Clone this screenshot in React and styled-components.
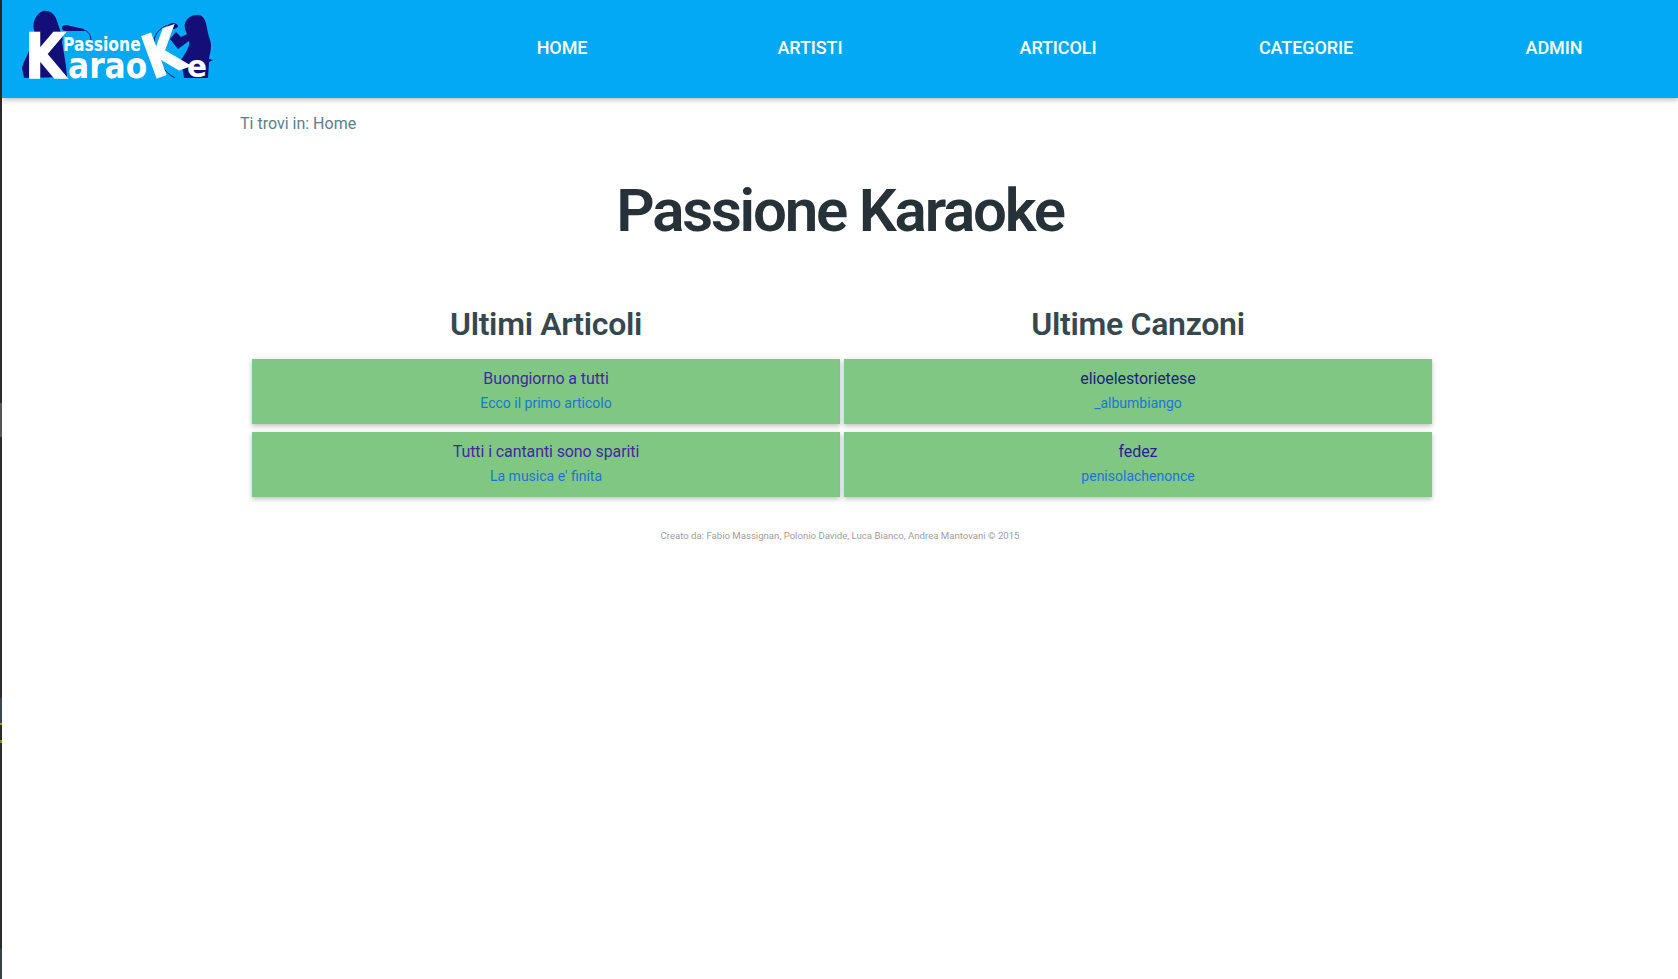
import React from "react";
import styled, { createGlobalStyle } from "styled-components";

const articles = [
  { title: "Buongiorno a tutti", text: "Ecco il primo articolo", tone: "#4527a0" },
  { title: "Tutti i cantanti sono spariti", text: "La musica e' finita", tone: "#4527a0" },
];

const songs = [
  { title: "elioelestorietese", text: "_albumbiango", tone: "#1a237e" },
  { title: "fedez", text: "penisolachenonce", tone: "#311b92" },
];

const navItems = ["HOME", "ARTISTI", "ARTICOLI", "CATEGORIE", "ADMIN"];

// viewBox starts at x=2 so the numbers below read as page coordinates
const Logo = () => (
  <LogoSvg viewBox="2 0 226 90" aria-label="Passione Karaoke">
    <g fill="#140f78">
      <path d="M43 11 C50 10 55 14 57 21 L60 30 C61 34 64 38 62 42 L66 66 L67 77 L24 78 L22 68 C24 60 28 55 30 48 C34 42 36 38 34 30 C32 22 36 14 43 11 Z" />
      <ellipse cx="66" cy="28" rx="4" ry="3" />
      <path d="M66 25 L84 29 L84 31 L66 31 Z" />
      <path d="M197 15 C203 14 206 20 207 28 C208 36 211 40 211 46 C211 52 209 56 209 59 L213 60 L209 62 L208 78 L184 78 L181 60 L186 52 C188 48 190 45 189 41 L178 49 L170 39 L176 32 L181 37 L187 34 C185 30 184 26 185 23 C187 18 191 15 197 15 Z" />
      <ellipse cx="173" cy="26" rx="5" ry="3" />
    </g>
    <g fill="none" stroke="#140f78" strokeWidth="1">
      <path d="M84 30 C88 31 91 35 91 41" />
      <path d="M170 25 C160 26 152 36 154 47 C156 60 164 72 175 78" />
    </g>
    <LogoWord transform="translate(25 78) scale(0.84 1)" $size={62} $heavy>K</LogoWord>
    <LogoWord transform="translate(63 51) scale(0.82 1)" $size={19}>Passione</LogoWord>
    <LogoWord transform="translate(68 78) scale(0.87 1)" $size={36}>arao</LogoWord>
    <LogoWord transform="rotate(-20 163 52) translate(144 74) scale(0.82 1)" $size={60} $heavy>K</LogoWord>
    <LogoWord transform="translate(187 77) scale(0.95 1)" $size={31}>e</LogoWord>
  </LogoSvg>
);

const CardColumn = ({ heading, items }) => (
  <Column>
    <ColumnTitle>{heading}</ColumnTitle>
    <CardList>
      {items.map((item) => (
        <Card key={item.title}>
          <CardTitle $tone={item.tone}>{item.title}</CardTitle>
          <CardText>{item.text}</CardText>
        </Card>
      ))}
    </CardList>
  </Column>
);

const App = () => {
  return (
    <Page>
      <GlobalStyle />
      <Header>
        <LogoSlot>
          <Logo />
        </LogoSlot>
        <Nav>
          {navItems.map((item) => (
            <NavLink key={item}>{item}</NavLink>
          ))}
        </Nav>
      </Header>
      <Main>
        <Breadcrumb>Ti trovi in: Home</Breadcrumb>
        <PageTitle>Passione Karaoke</PageTitle>
        <Columns>
          <CardColumn heading="Ultimi Articoli" items={articles} />
          <CardColumn heading="Ultime Canzoni" items={songs} />
        </Columns>
        <Footer>
          Creato da: Fabio Massignan, Polonio Davide, Luca Bianco, Andrea Mantovani © 2015
        </Footer>
      </Main>
    </Page>
  );
};

const GlobalStyle = createGlobalStyle`
  html, body {
    margin: 0;
    padding: 0;
    background: #fff;
  }
  body {
    font-family: Roboto, "Liberation Sans", sans-serif;
  }
`;

const Page = styled.div`
  min-height: 979px;
  box-sizing: border-box;
  padding-left: 2px;
  background:
    linear-gradient(
        to bottom,
        #2b2b2b 403px,
        #555 403px 437px,
        #2b2b2b 437px 698px,
        #3a464c 698px 723px,
        #9a9a20 723px 725px,
        #2b2b2b 725px 740px,
        #8a8a20 740px 743px,
        #2b2b2b 743px 949px,
        #3a424a 949px
      )
      0 0 / 2px 100% no-repeat,
    #fff;
`;

const Header = styled.header`
  height: 98px;
  display: flex;
  background: #03a9f4;
  box-shadow: 0 2px 5px rgba(0, 0, 0, 0.26);
`;

const LogoSlot = styled.div`
  width: 436px;
  flex: none;
`;

const LogoSvg = styled.svg`
  display: block;
  width: 226px;
  height: 90px;
`;

const LogoWord = styled.text`
  font-family: "DejaVu Sans", sans-serif;
  font-weight: 700;
  font-size: ${(props) => props.$size}px;
  fill: #fff;
  stroke: ${(props) => (props.$heavy ? "#fff" : "none")};
  stroke-width: 1.5px;
`;

const Nav = styled.nav`
  flex: 1;
  display: grid;
  grid-template-columns: repeat(5, 1fr);
`;

const NavLink = styled.a`
  display: block;
  text-align: center;
  line-height: 95px;
  font-size: 18px;
  font-weight: 500;
  letter-spacing: -0.1px;
  color: #fff;
`;

const Main = styled.main`
  width: 1200px;
  margin-left: 238px;
`;

const Breadcrumb = styled.div`
  padding-top: 16px;
  font-size: 16px;
  line-height: 20px;
  color: #607d8b;
`;

const PageTitle = styled.h1`
  margin: 41px 0 0;
  text-align: center;
  font-size: 60px;
  line-height: 72px;
  font-weight: 600;
  letter-spacing: -2.2px;
  color: #263238;
`;

const Columns = styled.div`
  display: grid;
  grid-template-columns: 588px 588px;
  column-gap: 4px;
  margin: 55px 0 0 12px;
`;

const Column = styled.section`
  text-align: center;
`;

const ColumnTitle = styled.h2`
  margin: 0;
  font-size: 32px;
  line-height: 44px;
  font-weight: 600;
  letter-spacing: -0.3px;
  color: #37474f;
`;

const CardList = styled.div`
  display: flex;
  flex-direction: column;
  gap: 8.5px;
  margin-top: 13px;
`;

const Card = styled.article`
  height: 64.5px;
  padding-top: 10px;
  box-sizing: border-box;
  background: #81c784;
  box-shadow: 0 2px 5px rgba(0, 0, 0, 0.26);
`;

const CardTitle = styled.div`
  font-size: 16px;
  line-height: 20px;
  letter-spacing: -0.1px;
  color: ${(props) => props.$tone};
`;

const CardText = styled.div`
  margin-top: 4px;
  font-size: 14px;
  line-height: 20px;
  color: #1976d2;
`;

const Footer = styled.footer`
  margin-top: 31px;
  text-align: center;
  font-size: 9.6px;
  line-height: 16px;
  color: #9e9e9e;
`;

export default App;
